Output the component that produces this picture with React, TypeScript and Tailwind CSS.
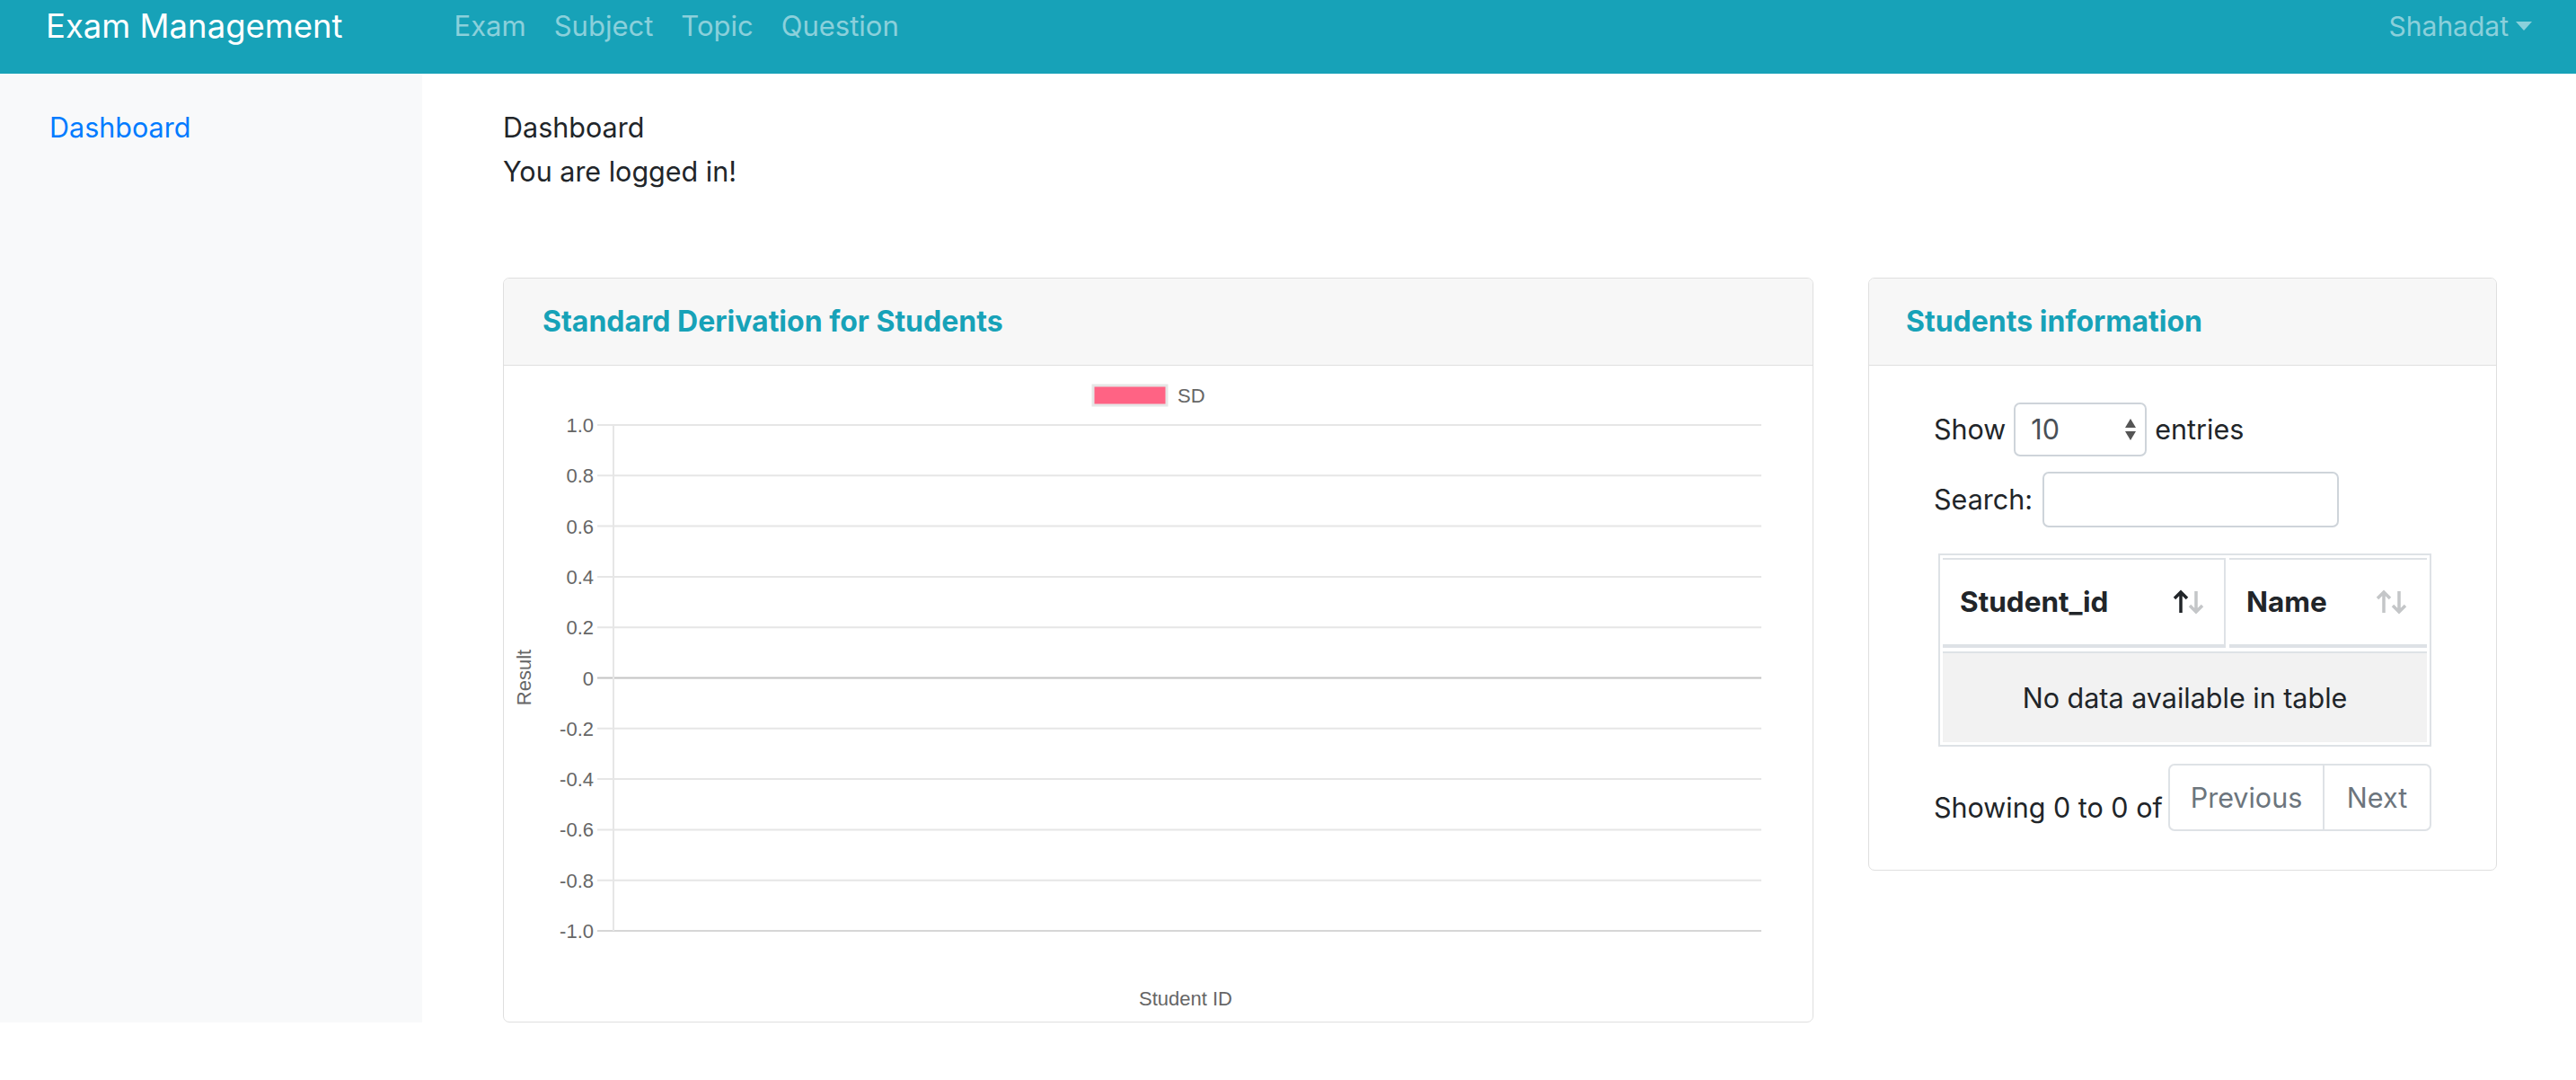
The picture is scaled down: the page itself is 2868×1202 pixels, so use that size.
const TICKS = ["1.0", "0.8", "0.6", "0.4", "0.2", "0", "-0.2", "-0.4", "-0.6", "-0.8", "-1.0"];

function SdChart() {
  const top = 66;
  const step = 56.3;
  return (
    <svg width="1457" height="730" className="block font-['Liberation_Sans',sans-serif]">
      {/* legend */}
      <rect x="656" y="22" width="82" height="22" fill="#ff6384" stroke="#e6e6e6" strokeWidth="3" />
      <text x="750" y="41" fontSize="22" fill="#666">SD</text>

      {TICKS.map((t, i) => {
        const y = top + i * step;
        const zero = t === "0";
        const last = i === TICKS.length - 1;
        return (
          <g key={t}>
            <line
              x1="104"
              x2="1400"
              y1={y}
              y2={y}
              stroke={zero ? "#c4c4c4" : last ? "#d6d6d6" : "#e6e6e6"}
              strokeWidth="2"
            />
            <text x="100" y={y + 8} fontSize="22" fill="#666" textAnchor="end">
              {t}
            </text>
          </g>
        );
      })}
      <line x1="122" x2="122" y1={top} y2={top + 10 * step} stroke="#e6e6e6" strokeWidth="2" />

      <text x="0" y="0" fontSize="22" fill="#666" textAnchor="middle" transform="translate(30 347) rotate(-90)">
        Result
      </text>
      <text x="759" y="712" fontSize="22" fill="#666" textAnchor="middle">
        Student ID
      </text>
    </svg>
  );
}

// datatables-style sort arrows
function SortIcon({ active }: { active?: boolean }) {
  const dim = "#c4c6c8";
  return (
    <svg width="38" height="30" viewBox="0 0 38 30" className="shrink-0">
      <path d="M10 27 V4 M3 11 L10 4 L17 11" fill="none" stroke={active ? "#212529" : dim} strokeWidth="3.5" />
      <path d="M27 3 V26 M20 19 L27 26 L34 19" fill="none" stroke={dim} strokeWidth="3.5" />
    </svg>
  );
}

export default function App() {
  return (
    <div className="w-[2868px] h-[1202px] bg-white font-['Inter',sans-serif] text-[30.5px] text-[#212529]">
      <nav className="h-[82px] bg-[#17a2b8] flex items-start pt-[6px] pl-[51px] pr-[49px]">
        <span className="text-[36.5px] leading-[46px] text-white">Exam Management</span>
        <div className="ml-[124px] flex gap-[31px] text-[31px] leading-[46px] text-white/50">
          <span>Exam</span>
          <span>Subject</span>
          <span>Topic</span>
          <span>Question</span>
        </div>
        <div className="ml-auto flex items-center gap-[8px] text-[30px] leading-[46px] text-white/50">
          <span>Shahadat</span>
          <span className="w-0 h-0 border-x-[9px] border-x-transparent border-t-[10px] border-t-white/50" />
        </div>
      </nav>

      <div className="flex h-[1056px]">
        <aside className="w-[470px] bg-[#f8f9fa] pl-[55px] pt-[35px]">
          <span className="leading-[49px] text-[#007bff]">Dashboard</span>
        </aside>

        <main className="flex-1 pl-[90px] pt-[35px]">
          <div className="leading-[49px]">
            <div>Dashboard</div>
            <div>You are logged in!</div>
          </div>

          <div className="mt-[94px] flex items-start gap-[61px]">
            {/* Chart card */}
            <div className="w-[1459px] h-[829px] border border-[#dfdfdf] rounded-[7px] overflow-hidden">
              <div className="h-[97px] bg-[#f7f7f7] border-b border-[#dfdfdf] px-[43px] flex items-center">
                <h5 className="text-[32px] font-bold text-[#17a2b8]">Standard Derivation for Students</h5>
              </div>
              <SdChart />
            </div>

            {/* Students card */}
            <div className="w-[700px] h-[660px] border border-[#dfdfdf] rounded-[7px] overflow-hidden">
              <div className="h-[97px] bg-[#f7f7f7] border-b border-[#dfdfdf] px-[41px] flex items-center">
                <h5 className="text-[32px] font-bold text-[#17a2b8]">Students information</h5>
              </div>
              <div className="pl-[72px] pt-[41px]">
                <div className="flex items-center gap-[9px]">
                  <span>Show</span>
                  <div className="w-[148px] h-[60px] border-2 border-[#ced4da] rounded-[7px] flex items-center justify-between pl-[17px] pr-[9px] text-[#495057]">
                    <span>10</span>
                    <svg width="14" height="28" viewBox="0 0 14 28">
                      <path d="M7 2 L13 12 L1 12 Z" fill="#555" />
                      <path d="M7 26 L13 16 L1 16 Z" fill="#555" />
                    </svg>
                  </div>
                  <span>entries</span>
                </div>

                <div className="mt-[17px] flex items-center gap-[11px]">
                  <span>Search:</span>
                  <div className="w-[330px] h-[62px] border-2 border-[#ced4da] rounded-[7px]" />
                </div>

                <div className="mt-[29px] ml-[5px] w-[549px] border-2 border-[#dee2e6] p-[3px]">
                  <div className="flex gap-[4px] h-[100px]">
                    <div className="w-[315px] border-t-2 border-b-[4px] border-r-2 border-[#dee2e6] flex items-center justify-between pl-[19px] pr-[20px]">
                      <span className="text-[31.5px] font-bold">Student_id</span>
                      <SortIcon active />
                    </div>
                    <div className="flex-1 border-t-2 border-b-[4px] border-[#dee2e6] flex items-center justify-between pl-[19px] pr-[20px]">
                      <span className="text-[31.5px] font-bold">Name</span>
                      <SortIcon />
                    </div>
                  </div>
                  <div className="mt-[4px] h-[101px] border-t-2 border-[#dee2e6] bg-[#f2f2f2] flex items-center justify-center">
                    No data available in table
                  </div>
                </div>

                <div className="mt-[19px] w-[554px] flex items-start justify-between">
                  <span className="mt-[27px] leading-[44px] whitespace-nowrap">Showing 0 to 0 of</span>
                  <div className="flex h-[75px] border-2 border-[#dee2e6] rounded-[7px] text-[#6c757d]">
                    <span className="w-[172px] flex items-center justify-center border-r-2 border-[#dee2e6]">Previous</span>
                    <span className="w-[117px] flex items-center justify-center">Next</span>
                  </div>
                </div>
              </div>
            </div>
          </div>
        </main>
      </div>
    </div>
  );
}
